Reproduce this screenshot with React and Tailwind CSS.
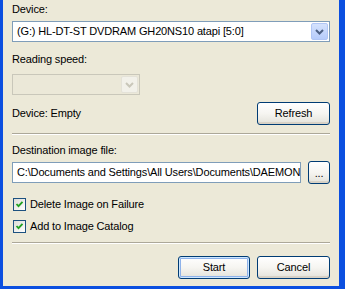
function Chevron({ color }) {
  return (
    <svg width="9" height="6" viewBox="0 0 9 6">
      <path d="M1 1 L4.5 4.5 L8 1" stroke={color} strokeWidth="2" fill="none" />
    </svg>
  );
}

function XpButton({ children, className = '', primary }) {
  return (
    <button
      type="button"
      className={`h-[23px] rounded-[3px] border border-[#003C74] bg-linear-to-b from-white via-[#F6F5F1] to-[#E3E2DA] text-[11px] text-black ${
        primary
          ? 'shadow-[inset_0_0_0_1px_#CEE7FF,inset_0_0_0_2px_#8EB2EA]'
          : 'shadow-[inset_0_-2px_0_#D8D2C6]'
      } ${className}`}
    >
      {children}
    </button>
  );
}

function Check({ label }) {
  return (
    <label className="flex items-center gap-[4px] h-[13px]">
      <span className="w-[13px] h-[13px] border border-[#1C5180] bg-linear-to-br from-[#DCDCD7] to-white flex items-center justify-center">
        <svg width="9" height="9" viewBox="0 0 9 9">
          <path d="M1.5 4 L3.5 6.2 L7.5 1.8" stroke="#21A121" strokeWidth="1.8" fill="none" />
        </svg>
      </span>
      <span>{label}</span>
    </label>
  );
}

function Separator() {
  return <div className="h-[2px] border-t border-[#ACA899] border-b border-b-white" />;
}

export default function App() {
  return (
    <div className="w-[345px] h-[289px] bg-[#ECE9D8] border-l-[3px] border-r-[6px] border-b-[3px] border-[#0B4FE0] font-['Liberation_Sans',Arial,sans-serif] text-[11px] leading-[13px] tracking-[-0.15px] text-black">
      <div className="pl-[9px] pr-[9px] pt-[3px] flex flex-col">
        <div>Device:</div>
        <div className="mt-[5px] h-[21px] border border-[#7F9DB9] bg-white flex items-center pl-[4px] pr-[1px]">
          <span className="flex-1">(G:) HL-DT-ST DVDRAM GH20NS10 atapi [5:0]</span>
          <span className="w-[17px] h-[17px] rounded-[2px] border border-[#B1C6F5] bg-linear-to-b from-[#D5E2FD] to-[#B6CCFB] flex items-center justify-center">
            <Chevron color="#4D6185" />
          </span>
        </div>

        <div className="mt-[11px]">Reading speed:</div>
        <div className="mt-[8px] w-[128px] h-[21px] border border-[#C9C7BA] bg-[#EBE8D8] flex items-center justify-end pr-[1px]">
          <span className="w-[17px] h-[17px] rounded-[2px] border border-[#E4E2D8] bg-[#F2F1EA] flex items-center justify-center">
            <Chevron color="#C9C7BA" />
          </span>
        </div>

        <div className="mt-[7px] flex items-center justify-between">
          <span>Device: Empty</span>
          <XpButton className="w-[73px]">Refresh</XpButton>
        </div>

        <div className="mt-[8px]">
          <Separator />
        </div>

        <div className="mt-[9px]">Destination image file:</div>
        <div className="mt-[4px] flex items-center gap-[7px]">
          <div className="flex-1 h-[21px] border border-[#7F9DB9] bg-white flex items-center pl-[4px] overflow-hidden whitespace-nowrap">
            C:\Documents and Settings\All Users\Documents\DAEMON
          </div>
          <XpButton className="w-[22px] leading-[10px]">...</XpButton>
        </div>

        <div className="mt-[14px] pl-[1px]">
          <Check label="Delete Image on Failure" />
        </div>
        <div className="mt-[9px] pl-[1px]">
          <Check label="Add to Image Catalog" />
        </div>

        <div className="mt-[9px]">
          <Separator />
        </div>

        <div className="mt-[12px] flex justify-end gap-[7px]">
          <XpButton primary className="w-[72px]">Start</XpButton>
          <XpButton className="w-[73px]">Cancel</XpButton>
        </div>
      </div>
    </div>
  );
}
